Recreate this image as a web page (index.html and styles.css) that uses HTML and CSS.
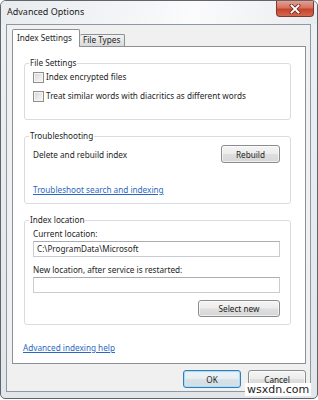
FILE: index.html
```html
<!DOCTYPE html>
<html>
<head>
<meta charset="utf-8">
<link rel="stylesheet" href="styles.css">
</head>
<body>
<div class="window">
  <div class="titlebar">
    <span class="title">Advanced Options</span>
    <div class="close">
      <svg width="12" height="10" viewBox="0 0 12 10">
        <path d="M2.5 1.5 L9.5 8.5 M9.5 1.5 L2.5 8.5" stroke="#6a2a20" stroke-width="3.4" stroke-linecap="square" fill="none"/>
        <path d="M2.5 1.5 L9.5 8.5 M9.5 1.5 L2.5 8.5" stroke="#ffffff" stroke-width="1.9" stroke-linecap="square" fill="none"/>
      </svg>
    </div>
  </div>
  <div class="client">
    <div class="tabs">
      <div class="tab active">Index Settings</div>
      <div class="tab">File Types</div>
    </div>
    <div class="panel">
      <fieldset class="group g-file">
        <legend>File Settings</legend>
        <label class="check first"><span class="box"></span>Index encrypted files</label>
        <label class="check second"><span class="box"></span>Treat similar words with diacritics as different words</label>
      </fieldset>
      <fieldset class="group g-trouble">
        <legend>Troubleshooting</legend>
        <div class="row">
          <span>Delete and rebuild index</span>
          <button class="btn rebuild">Rebuild</button>
        </div>
        <a class="link trouble-link">Troubleshoot search and indexing</a>
      </fieldset>
      <fieldset class="group g-loc">
        <legend>Index location</legend>
        <div class="field-label first">Current location:</div>
        <div class="input">C:\ProgramData\Microsoft</div>
        <div class="field-label second">New location, after service is restarted:</div>
        <div class="input"></div>
        <div class="select-row"><button class="btn select">Select new</button></div>
      </fieldset>
      <a class="link help">Advanced indexing help</a>
    </div>
    <div class="buttons">
      <button class="btn ok">OK</button>
      <button class="btn">Cancel</button>
    </div>
  </div>
  <div class="watermark">wsxdn.com</div>
</div>
</body>
</html>
```
FILE: styles.css
```css
* { box-sizing: border-box; }
html, body { margin: 0; padding: 0; }
body {
  background: #ffffff;
  font-family: "Noto Sans", "Open Sans", sans-serif;
  font-size: 8.2px;
  color: #1e1e1e;
}
.window {
  position: relative;
  width: 318px;
  height: 399px;
  border: 1px solid #5f656b;
  border-radius: 6px 6px 5px 5px;
  background: linear-gradient(180deg, #eef1f4 0%, #e6e9ed 60%, #e2e6ea 100%);
  display: flex;
  flex-direction: column;
  overflow: hidden;
}
.titlebar {
  height: 23px;
  flex: none;
  display: flex;
  align-items: flex-start;
  padding-left: 6px;
  background: linear-gradient(100deg, #e9ecef 0%, #f4f6f8 45%, #fbfbfc 60%, #e9ecef 100%);
}
.title {
  font-size: 9px;
  line-height: 22px;
  color: #1b1b1b;
}
.close {
  margin-left: auto;
  margin-right: 3px;
  width: 38px;
  height: 16px;
  border: 1px solid #7a3a30;
  border-top: none;
  border-radius: 0 0 4px 4px;
  background: linear-gradient(180deg, #e6a092 0%, #d6725f 45%, #c6442c 55%, #d6664f 100%);
  display: flex;
  align-items: center;
  justify-content: center;
}
.close svg { display: block; }
.client {
  flex: 1;
  margin: 0 6px 6px 5px;
  border: 1px solid #8d98a3;
  background: #f0f0f0;
  padding: 4px 4px 0 5px;
  display: flex;
  flex-direction: column;
}
.tabs {
  height: 18px;
  flex: none;
  display: flex;
  align-items: flex-end;
  margin-bottom: -1px;
}
.tab {
  border: 1px solid #8c9097;
  border-bottom: none;
  border-radius: 2px 2px 0 0;
  color: #1e1e1e;
  white-space: nowrap;
}
.tab.active {
  position: relative;
  z-index: 1;
  height: 18px;
  width: 68px;
  background: #ffffff;
  padding: 1px 0 0 4px;
  line-height: 14px;
}
.tab:not(.active) {
  height: 12px;
  width: 45px;
  margin-bottom: 1px;
  border-left: none;
  background: linear-gradient(180deg, #f2f2f2 0%, #e6e6e6 50%, #d9d9d9 100%);
  line-height: 10px;
  padding-left: 3px;
}
.panel {
  height: 318px;
  flex: none;
  border: 1px solid #8c9097;
  background: #ffffff;
  padding: 0 14px 0 11px;
  display: flex;
  flex-direction: column;
}
.group {
  margin: 10px 0 0 0;
  padding: 0 10px 0 8px;
  border: 1px solid #d5dde3;
  border-radius: 3px;
  min-width: 0;
}
.group legend {
  padding: 0 1px;
  margin-left: -4px;
  line-height: 12px;
  color: #1e1e1e;
}
.check {
  display: flex;
  align-items: center;
  height: 14px;
  line-height: 14px;
  white-space: nowrap;
}
.check.first { margin-top: 1px; }
.check.second { margin-top: 5px; }
.g-file { padding-bottom: 16px; }
.box {
  width: 11px;
  height: 11px;
  margin-right: 2px;
  border: 1px solid #8f8f8f;
  background: linear-gradient(135deg, #d3d3d3 0%, #e8e8e8 50%, #f8f8f8 100%);
  box-shadow: inset 0 0 0 1px #f4f4f4;
  flex: none;
}
.row {
  margin-top: 3px;
  display: flex;
  align-items: center;
  justify-content: space-between;
}
.btn {
  font-family: inherit;
  font-size: inherit;
  color: #1e1e1e;
  height: 18px;
  padding: 0;
  border: 1px solid #8a8c8e;
  border-radius: 3px;
  background: linear-gradient(180deg, #f5f5f5 0%, #ececec 48%, #dfdfdf 52%, #d6d6d6 100%);
  box-shadow: inset 0 0 0 1px rgba(255,255,255,0.6);
  line-height: 15px;
}
.rebuild { width: 59px; }
.link {
  color: #2a68c2;
  text-decoration: underline;
  line-height: 14px;
  display: block;
}
.trouble-link { margin-top: 20px; margin-bottom: 6px; }
.field-label { line-height: 14px; }
.field-label.first { margin-top: 1px; }
.field-label.second { margin-top: 6px; }
.input {
  height: 16px;
  border: 1px solid #c9cdd2;
  border-top-color: #abadb3;
  background: #ffffff;
  padding-left: 3px;
  line-height: 14px;
}
.select-row {
  margin-top: 7px;
  margin-bottom: 7px;
  display: flex;
  justify-content: flex-end;
}
.select { width: 82px; height: 17px; }
.help { margin: 16px 0 0 -1px; }
.buttons {
  margin-top: 6px;
  display: flex;
  justify-content: flex-end;
  gap: 7px;
}
.buttons .btn { width: 58px; }
.btn.ok {
  border-color: #3a7cb0;
  box-shadow: inset 0 0 0 1px #a9dcf5, inset 0 0 3px 1px #cdeefc;
  background: linear-gradient(180deg, #f0f6f9 0%, #e6eef2 48%, #d8e2e8 52%, #d0dbe1 100%);
}
.watermark {
  position: absolute;
  left: 244px;
  top: 382px;
  background: #ffffff;
  padding: 0 2px;
  font-family: "DejaVu Sans", sans-serif;
  font-size: 11px;
  line-height: 13px;
  color: #222222;
}
```
